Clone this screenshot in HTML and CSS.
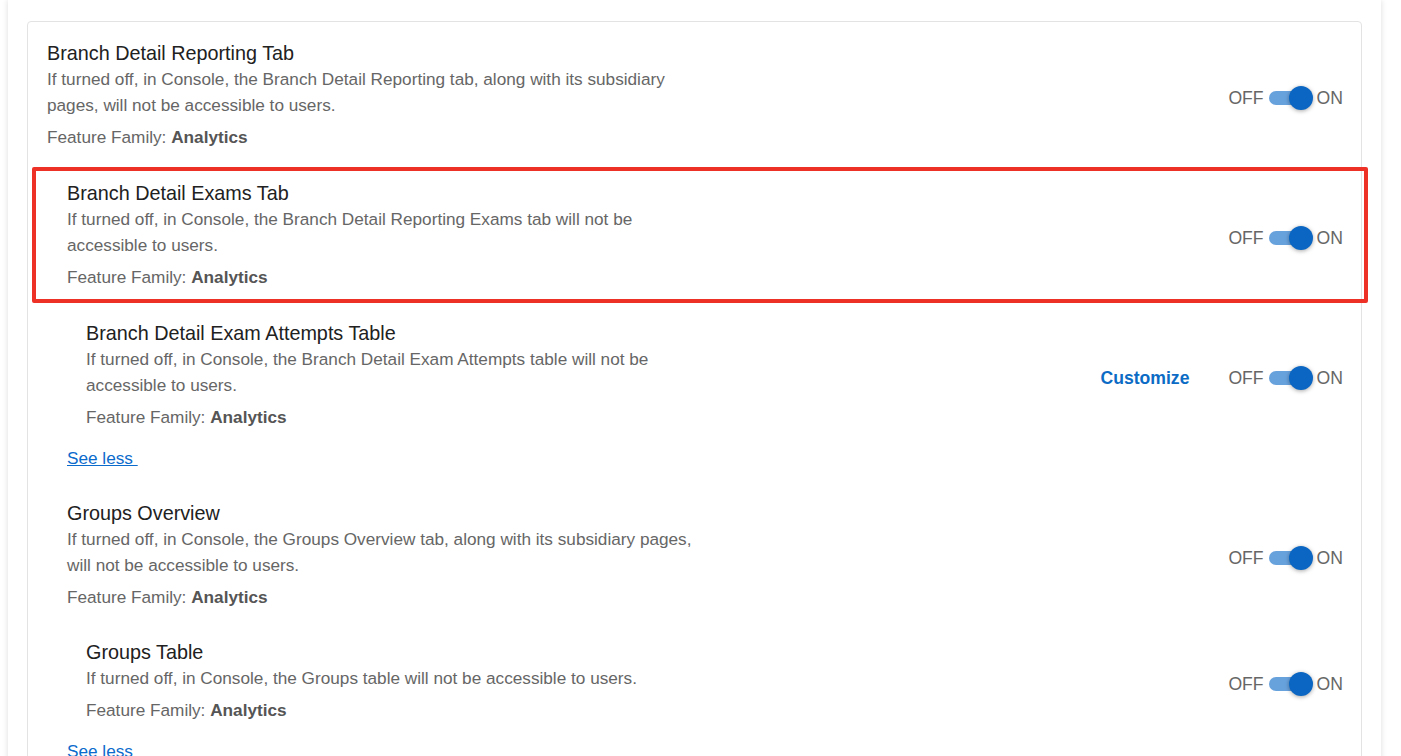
FILE: index.html
```html
<!DOCTYPE html>
<html lang="en">
<head>
    <meta charset="UTF-8">
    <meta name="viewport" content="width=device-width, initial-scale=1.0">
    <title>Feature Settings</title>
    <link rel="stylesheet" href="styles.css">
</head>
<body>
    <main class="panel">
        <section class="card">

            <div class="feature">
                <div class="feature-text">
                    <h4>Branch Detail Reporting Tab</h4>
                    <p class="desc">If turned off, in Console, the Branch Detail Reporting tab, along with its subsidiary pages, will not be accessible to users.</p>
                    <p class="family">Feature Family: <b>Analytics</b></p>
                </div>
                <div class="controls">
                    <span class="state">OFF</span>
                    <span class="switch"><span class="knob"></span></span>
                    <span class="state state-on">ON</span>
                </div>
            </div>

            <div class="feature depth-1 marked">
                <div class="feature-text">
                    <h4>Branch Detail Exams Tab</h4>
                    <p class="desc">If turned off, in Console, the Branch Detail Reporting Exams tab will not be accessible to users.</p>
                    <p class="family">Feature Family: <b>Analytics</b></p>
                </div>
                <div class="controls">
                    <span class="state">OFF</span>
                    <span class="switch"><span class="knob"></span></span>
                    <span class="state state-on">ON</span>
                </div>
            </div>

            <div class="feature depth-2">
                <div class="feature-text">
                    <h4>Branch Detail Exam Attempts Table</h4>
                    <p class="desc">If turned off, in Console, the Branch Detail Exam Attempts table will not be accessible to users.</p>
                    <p class="family">Feature Family: <b>Analytics</b></p>
                </div>
                <div class="controls">
                    <a href="#" class="customize">Customize</a>
                    <span class="state">OFF</span>
                    <span class="switch"><span class="knob"></span></span>
                    <span class="state state-on">ON</span>
                </div>
            </div>
            <div class="see-less"><a href="#">See less&nbsp;</a></div>

            <div class="feature depth-1">
                <div class="feature-text">
                    <h4>Groups Overview</h4>
                    <p class="desc">If turned off, in Console, the Groups Overview tab, along with its subsidiary pages, will not be accessible to users.</p>
                    <p class="family">Feature Family: <b>Analytics</b></p>
                </div>
                <div class="controls">
                    <span class="state">OFF</span>
                    <span class="switch"><span class="knob"></span></span>
                    <span class="state state-on">ON</span>
                </div>
            </div>

            <div class="feature depth-2 last">
                <div class="feature-text">
                    <h4>Groups Table</h4>
                    <p class="desc">If turned off, in Console, the Groups table will not be accessible to users.</p>
                    <p class="family">Feature Family: <b>Analytics</b></p>
                </div>
                <div class="controls">
                    <span class="state">OFF</span>
                    <span class="switch"><span class="knob"></span></span>
                    <span class="state state-on">ON</span>
                </div>
            </div>
            <div class="see-less"><a href="#">See less</a></div>

        </section>
    </main>
</body>
</html>
```

FILE: styles.css
```css
:root {
--biru: #0a66c2;
--biru-muda: #68a2dd;
--teks: #212121;
--abu: #666666;
--garis: #e3e3e3;
--merah: #ee3127;
}

*,
*::before,
*::after {
box-sizing: border-box;
}

body {
font-family: "Liberation Sans", Arial, sans-serif;
background-color: #ffffff;
margin: 0;
overflow: hidden;
}

.panel {
margin-left: 8px;
width: 1373px;
min-height: 100vh;
padding: 21px 19px;
background-color: #ffffff;
box-shadow: 0 0 6px rgba(0, 0, 0, 0.14);
}

.card {
border: 1px solid var(--garis);
border-radius: 4px;
padding: 3px 18px 0 19px;
}

/* one feature row: text on the left, switch on the right */
.feature {
display: flex;
align-items: center;
justify-content: space-between;
padding: 16px 0;
position: relative;
}

.depth-1 {
margin-left: 20px;
}

.depth-2 {
margin-left: 39px;
}

.last {
padding-top: 15px;
}

/* red frame around the selected row */
.marked::after {
content: "";
position: absolute;
top: 2px;
bottom: 2px;
left: -35px;
right: -25px;
border: 4px solid var(--merah);
border-radius: 2px;
pointer-events: none;
}

.feature-text h4 {
margin: 0 0 1px;
font-size: 19.8px;
font-weight: 400;
line-height: 24px;
color: var(--teks);
}

.desc {
margin: 0;
max-width: 635px;
font-size: 17.2px;
line-height: 26px;
color: var(--abu);
}

.family {
margin: 7px 0 0;
font-size: 17.2px;
line-height: 24px;
color: var(--abu);
}

.family b {
color: #555555;
}

.controls {
display: flex;
align-items: center;
padding-top: 6px;
}

.customize {
margin-right: 39px;
font-size: 17.6px;
font-weight: 700;
color: #0b6bc5;
text-decoration: none;
}

.state {
font-size: 17.6px;
line-height: 24px;
color: var(--abu);
}

.state-on {
margin-left: 4px;
}

.switch {
position: relative;
width: 40px;
height: 14px;
margin-left: 5px;
margin-right: 4px;
border-radius: 7px;
background-color: var(--biru-muda);
}

.knob {
position: absolute;
top: -5px;
right: -4px;
width: 24px;
height: 24px;
border-radius: 50%;
background-color: var(--biru);
box-shadow: 0 1px 4px rgba(0, 0, 0, 0.35);
}

.see-less {
margin: 1px 0 15px 20px;
font-size: 17.2px;
line-height: 24px;
}

.see-less a {
color: #0b6bcc;
text-decoration: underline;
}
```
